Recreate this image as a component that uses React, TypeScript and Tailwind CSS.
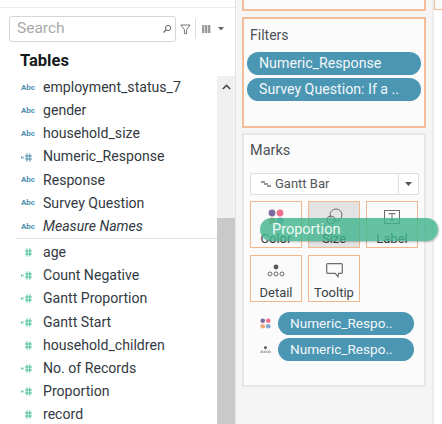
import type { ReactNode } from 'react';

type Kind = 'abc' | 'calc' | 'num' | 'calcBlue';

const fields: { name: string; kind: Kind; italic?: boolean }[] = [
  { name: 'employment_status_7', kind: 'abc' },
  { name: 'gender', kind: 'abc' },
  { name: 'household_size', kind: 'abc' },
  { name: 'Numeric_Response', kind: 'calcBlue' },
  { name: 'Response', kind: 'abc' },
  { name: 'Survey Question', kind: 'abc' },
  { name: 'Measure Names', kind: 'abc', italic: true },
];

const measures: { name: string; kind: Kind }[] = [
  { name: 'age', kind: 'num' },
  { name: 'Count Negative', kind: 'calc' },
  { name: 'Gantt Proportion', kind: 'calc' },
  { name: 'Gantt Start', kind: 'calc' },
  { name: 'household_children', kind: 'num' },
  { name: 'No. of Records', kind: 'calc' },
  { name: 'Proportion', kind: 'calc' },
  { name: 'record', kind: 'num' },
];

function FieldIcon({ kind }: { kind: Kind }) {
  if (kind === 'abc') {
    return <span className="text-[8px] font-bold text-[#4f8fae] tracking-[-0.1px]">Abc</span>;
  }
  const color = kind === 'calcBlue' ? '#4f8fae' : '#4cc09a';
  return (
    <svg width="12" height="9" viewBox="0 0 12 9" fill="none" stroke={color} strokeWidth="1.1">
      <path d="M6 .5v8M8.8 .5v8M4 3h7M4 6h7" />
      {kind !== 'num' && <path d="M0 4.5h2.5" strokeWidth="2" strokeDasharray="1 0.5" />}
    </svg>
  );
}

function FieldRow({ name, kind, italic }: { name: string; kind: Kind; italic?: boolean }) {
  return (
    <div className="h-[23.17px] flex items-center">
      <div className="w-[43px] pl-[21px] shrink-0 flex items-center">
        <FieldIcon kind={kind} />
      </div>
      <span className={`text-[14.1px] text-[#333a42] whitespace-nowrap ${italic ? 'italic' : ''}`}>{name}</span>
    </div>
  );
}

function BluePill({ children, className }: { children: ReactNode; className: string }) {
  return (
    <div className={`h-[23px] rounded-full bg-[#4a96b3] text-[#f2f7f9] leading-[23px] whitespace-nowrap ${className}`}>
      {children}
    </div>
  );
}

function MarkCard({ label, icon, active }: { label: string; icon: ReactNode; active?: boolean }) {
  return (
    <div className={`w-[52px] h-[47px] border border-[#f2b78c] flex flex-col items-center ${active ? 'bg-[#e3e3e3]' : ''}`}>
      <div className="h-[27px] mt-[1px] mb-[1px] flex items-center justify-center">{icon}</div>
      <span className="text-[13px] leading-[16px] text-[#3b4148]">{label}</span>
    </div>
  );
}

function FourDots({ size }: { size: number }) {
  return (
    <svg width={size} height={size} viewBox="0 0 16 16">
      <circle cx="4" cy="4" r="3.4" fill="#7d6a9f" />
      <circle cx="12" cy="4" r="3.4" fill="#f0708a" />
      <circle cx="4" cy="12" r="3.4" fill="#f0a878" />
      <circle cx="12" cy="12" r="3.4" fill="#86a8d0" />
    </svg>
  );
}

function DetailDots({ w }: { w: number }) {
  return (
    <svg width={w} height={w * 0.72} viewBox="0 0 18 13" fill="none">
      <circle cx="9" cy="3" r="2.4" fill="#55595e" />
      <circle cx="3" cy="10" r="2" stroke="#66696e" />
      <circle cx="9" cy="10" r="2" stroke="#66696e" />
      <circle cx="15" cy="10" r="2" stroke="#66696e" />
    </svg>
  );
}

export default function App() {
  return (
    <div className="relative w-[442px] h-[424px] overflow-hidden flex bg-white font-['Roboto','Liberation_Sans',sans-serif]">
      {/* data pane */}
      <div className="w-[236px] h-full shrink-0 border-r border-[#e4e4e4] flex flex-col">
        <div className="h-[8px] border-b border-[#eeeeee] shrink-0" />
        <div className="flex items-center h-[26px] mt-[8px] pl-[9px] shrink-0">
          <div className="w-[167px] h-[26px] border border-[#d6d6d6] rounded-[3px] flex items-center justify-between pl-[7px] pr-[3px]">
            <span className="text-[15.5px] text-[#a9a9a9]">Search</span>
            <svg width="10" height="10" viewBox="0 0 10 10" fill="none" stroke="#666" strokeWidth="1">
              <circle cx="6" cy="4" r="2.6" />
              <path d="M4 6 1.5 8.5" strokeWidth="1.3" />
            </svg>
          </div>
          <svg className="ml-[4px]" width="11" height="11" viewBox="0 0 11 11" fill="none" stroke="#6f7478" strokeWidth="1">
            <path d="M.8 1h9.4L6.6 5.5v4.2H4.4V5.5z" />
          </svg>
          <div className="ml-[4px] w-px h-[20px] bg-[#dddddd]" />
          <div className="ml-[6px] w-[9px] h-[8px] bg-[repeating-linear-gradient(90deg,#9a9a9a_0,#9a9a9a_2px,#d8d8d8_2px,#d8d8d8_3px)]" />
          <svg className="ml-[7px]" width="6" height="4" viewBox="0 0 6 4">
            <path d="M0 0h6L3 3.5z" fill="#666" />
          </svg>
        </div>
        <div className="h-[34px] pt-[4px] flex items-center pl-[20px] text-[16.5px] font-bold text-[#15181b] shrink-0">Tables</div>
        <div className="flex flex-1 min-h-0">
          <div className="w-[217px] shrink-0">
            {fields.map((f) => (
              <FieldRow key={f.name} name={f.name} kind={f.kind} italic={f.italic} />
            ))}
            <div className="ml-[16px] mb-[2px] h-px bg-[#e4e4e4]" />
            {measures.map((f) => (
              <FieldRow key={f.name} name={f.name} kind={f.kind} />
            ))}
          </div>
          <div className="flex-1 flex flex-col bg-[#f0f0f0]">
            <div className="h-[142px] flex justify-center pt-[8px]">
              <svg width="9" height="6" viewBox="0 0 9 6" fill="none" stroke="#444" strokeWidth="1.5">
                <path d="M.8 5 4.5 1.4 8.2 5" />
              </svg>
            </div>
            <div className="flex-1 bg-[#c9c9c9]" />
          </div>
        </div>
      </div>

      {/* shelves */}
      <div className="w-[196px] h-full shrink-0 bg-[#f5f5f5] px-[6px] flex flex-col">
        <div className="h-[11px] border-x-2 border-b-2 border-[#f3bd98] bg-[#fafafa] shrink-0" />
        <div className="h-[111px] mt-[6px] border-2 border-[#f3bd98] bg-[#fbfbfb] shrink-0 px-[3px]">
          <div className="h-[32px] mb-[1px] pl-[3px] flex items-center text-[14px] text-[#4d5257]">Filters</div>
          <div className="flex flex-col gap-[3px]">
            <BluePill className="pl-[12px] text-[14.2px]">Numeric_Response</BluePill>
            <BluePill className="pl-[12px] text-[14.2px]">Survey Question: If a ..</BluePill>
          </div>
        </div>
        <div className="h-[254px] mt-[5px] border-2 border-[#e6e6e6] bg-[#fbfbfb] shrink-0 pl-[6px] pr-[5px]">
          <div className="h-[32px] flex items-center text-[14.5px] text-[#4d5257]">Marks</div>
          <div className="mt-[6px] h-[22px] border border-[#dedede] rounded-[2px] bg-white flex items-center">
            <svg className="ml-[10px]" width="10" height="6" viewBox="0 0 10 6" fill="none" stroke="#777" strokeWidth="1.5">
              <path d="M0 1h4M3 3h4M6 5h4" />
            </svg>
            <span className="ml-[4px] flex-1 text-[13px] text-[#50555a]">Gantt Bar</span>
            <div className="w-[20px] h-full border-l border-[#dedede] flex items-center justify-center">
              <svg width="7" height="4" viewBox="0 0 7 4">
                <path d="M0 0h7L3.5 4z" fill="#555" />
              </svg>
            </div>
          </div>
          <div className="mt-[6px] flex gap-[6px]">
            <MarkCard label="Color" icon={<FourDots size={16} />} />
            <MarkCard
              label="Size"
              active
              icon={
                <svg width="17" height="17" viewBox="0 0 17 17" fill="none" stroke="#6a6d70">
                  <circle cx="10" cy="7" r="6" />
                  <circle cx="5" cy="12" r="4" />
                </svg>
              }
            />
            <MarkCard
              label="Label"
              icon={
                <svg width="16" height="14" viewBox="0 0 16 14" fill="none" stroke="#6a6d70">
                  <rect x=".5" y=".5" width="15" height="13" />
                  <path d="M5 4.5v-1h6v1M8 3.5v7M6.5 10.5h3" />
                </svg>
              }
            />
          </div>
          <div className="mt-[7px] flex gap-[6px]">
            <MarkCard label="Detail" icon={<DetailDots w={18} />} />
            <MarkCard
              label="Tooltip"
              icon={
                <svg width="17" height="15" viewBox="0 0 17 15" fill="none" stroke="#6a6d70" strokeWidth="1.2">
                  <path d="M1.5.7h14a.8.8 0 0 1 .8.8v8a.8.8 0 0 1-.8.8h-3l-.5 3.4-2.8-3.4H1.5a.8.8 0 0 1-.8-.8v-8a.8.8 0 0 1 .8-.8z" />
                </svg>
              }
            />
          </div>
          <div className="mt-[10px] flex flex-col gap-[3px]">
            <div className="flex items-center">
              <div className="w-[28px] pl-[10px] flex items-center"><FourDots size={11} /></div>
              <BluePill className="w-[136px] pl-[12px] h-[22px] text-[13.6px]">Numeric_Respo..</BluePill>
            </div>
            <div className="flex items-center">
              <div className="w-[28px] pl-[10px] flex items-center"><DetailDots w={11} /></div>
              <BluePill className="w-[136px] pl-[12px] h-[22px] text-[13.6px]">Numeric_Respo..</BluePill>
            </div>
          </div>
        </div>
      </div>

      {/* view edge */}
      <div className="flex-1 h-full border-l-2 border-[#ececec] bg-white relative">
        <div className="h-[10px] border-l border-b border-[#f3bd98] bg-[#fafafa]" />
      </div>

      {/* dragged pill */}
      <div className="absolute left-[260px] top-[218px] w-[178px] h-[23px] rounded-full bg-[#3fb48c]/80 shadow-[1px_1px_2px_rgba(0,0,0,0.25)] pl-[12px] text-[14.5px] leading-[23px] text-[#eefaf5]">
        Proportion
      </div>
    </div>
  );
}
